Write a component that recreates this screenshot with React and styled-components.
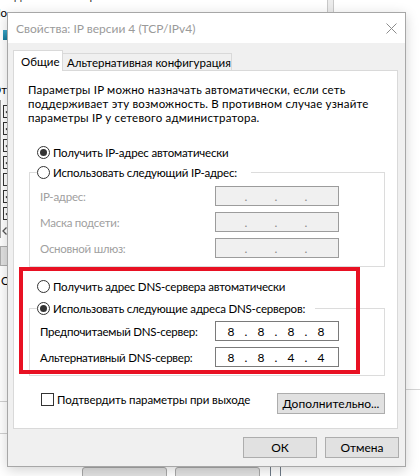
import React from "react";
import styled, { createGlobalStyle } from "styled-components";

const Global = createGlobalStyle`
  html, body { margin: 0; padding: 0; background: #fff; }
  body {
    font-family: Lato, "Noto Sans", sans-serif;
    font-size: 11.5px;
    color: #000;
  }
  * { box-sizing: border-box; }
`;

const Desktop = styled.div`
  position: relative;
  width: 420px;
  height: 476px;
  overflow: hidden;
  background: #fff;
`;

/* ---------- background window (mostly hidden) ---------- */
const BackWindow = styled.div`
  position: absolute;
  inset: 0;
  display: grid;
  grid-template-columns: 7px 1fr 15px;
  grid-template-rows: 12px 1fr 10px;
`;

const BackTop = styled.div`
  grid-column: 1 / 4;
  grid-row: 1;
  display: flex;
  align-items: flex-start;
`;

const TopText = styled.div`
  margin-top: -11px;
  line-height: 14px;
  color: #333;
  white-space: nowrap;
`;

const TopBar = styled.div`
  margin-left: auto;
  margin-right: 86px;
  width: 7px;
  height: 12px;
  background: #ececec;
  border-left: 1px solid #c9c9c9;
  border-right: 1px solid #c9c9c9;
`;

const BackLeft = styled.div`
  grid-column: 1;
  grid-row: 2 / 4;
  display: flex;
  flex-direction: column;
`;

const StripText = styled.div`
  margin-top: ${(p) => p.$mt}px;
  width: 7px;
  height: 12px;
  line-height: 12px;
  white-space: nowrap;
  display: flex;
  justify-content: ${(p) => (p.$start ? "flex-start" : "flex-end")};
  padding-left: ${(p) => (p.$start ? 1 : 0)}px;
`;

const StripIcon = styled.div`
  margin-top: 11px;
  margin-left: 3px;
  width: 6px;
  height: 10px;
  background: linear-gradient(#3aa6c9, #157a9c);
`;

const ListBox = styled.div`
  margin-top: 4px;
  width: 40px;
  border-left: 1px solid #a0a0a0;
  display: flex;
  flex-direction: column;
  gap: 4px;
  padding-top: 5px;
`;

const Tick = styled.div`
  margin-left: 2px;
  width: 13px;
  height: 13px;
  border: 1px solid #333;
  background: #fff;
  display: flex;
  align-items: center;
  justify-content: center;
`;

const ScrollArrow = styled.div`
  height: 14px;
  display: flex;
  align-items: center;
  padding-left: 1px;
`;

const BackButtonSliver = styled.div`
  margin-top: 8px;
  width: 30px;
  height: 20px;
  background: #e1e1e1;
  border: 1px solid #adadad;
`;

const StripLine = styled.div`
  margin-top: ${(p) => p.$mt}px;
  width: 7px;
  height: 1px;
  background: #d0d0d0;
`;

const BackRight = styled.div`
  grid-column: 3;
  grid-row: 2 / 3;
`;

const RightLine = styled.div`
  margin-top: 377px;
  height: 1px;
  background: #d5d5d5;
`;

const BackBottom = styled.div`
  grid-column: 1 / 4;
  grid-row: 3;
  display: flex;
  align-items: flex-start;
  padding-top: 1px;
`;

const BackButton = styled.div`
  margin-left: ${(p) => p.$ml}px;
  width: 85px;
  height: 14px;
  background: #e1e1e1;
  border: 1px solid #a8a8a8;
  border-radius: 3px;
`;

const BackEdge = styled.div`
  margin-left: ${(p) => p.$ml}px;
  margin-top: -1px;
  width: 1px;
  height: 11px;
  background: #6e7b88;
`;

/* ---------- the dialog ---------- */
const Dialog = styled.div`
  position: absolute;
  left: 7px;
  top: 12px;
  width: 399px;
  height: 455px;
  border: 1px solid #a7a7a7;
  background: #f0f0f0;
  display: flex;
  flex-direction: column;
  box-shadow: 0 3px 12px rgba(0, 0, 0, 0.18);
`;

const TitleBar = styled.div`
  flex-shrink: 0;
  height: 30px;
  background: #fff;
  display: flex;
  align-items: center;
  padding-left: 8px;
`;

const Title = styled.div`
  flex: 1;
  font-size: 12px;
  color: #9a9a9a;
  white-space: nowrap;
`;

const CloseBox = styled.div`
  width: 30px;
  height: 30px;
  margin-right: -1px;
  display: flex;
  align-items: center;
  justify-content: center;
`;

const Body = styled.div`
  flex: 1;
  display: flex;
  flex-direction: column;
  padding: 7px 7px 0 5px;
`;

const TabStrip = styled.div`
  position: relative;
  z-index: 1;
  display: flex;
  align-items: flex-end;
  height: 21px;
  margin-bottom: -1px;
`;

const Tab = styled.div`
  height: ${(p) => (p.$active ? 21 : 17)}px;
  margin-bottom: ${(p) => (p.$active ? 0 : 1)}px;
  padding-left: ${(p) => (p.$active ? 7 : 4)}px;
  width: ${(p) => p.$w}px;
  display: flex;
  align-items: center;
  background: ${(p) => (p.$active ? "#fff" : "#f0f0f0")};
  border: 1px solid #d9d9d9;
  border-bottom: none;
  border-left: ${(p) => (p.$active ? "1px solid #d9d9d9" : "none")};
  white-space: nowrap;
`;

const Panel = styled.div`
  height: 359px;
  background: #fff;
  border: 1px solid #d9d9d9;
  padding: 12px 12px 0 15px;
  display: flex;
  flex-direction: column;
`;

const Paragraph = styled.p`
  margin: 0 0 0 -1px;
  line-height: 14px;
  letter-spacing: 0.2px;
  white-space: nowrap;
`;

const RadioRow = styled.label`
  margin-top: ${(p) => p.$mt || 0}px;
  height: 20px;
  padding-left: 8px;
  display: flex;
  align-items: center;
  gap: 3px;
  letter-spacing: -0.2px;
  white-space: nowrap;
`;

const Radio = styled.span`
  flex-shrink: 0;
  width: 13px;
  height: 13px;
  border-radius: 50%;
  border: 1px solid #333;
  background: #fff;
  display: flex;
  align-items: center;
  justify-content: center;
  &::after {
    content: "";
    display: ${(p) => (p.$checked ? "block" : "none")};
    width: 7px;
    height: 7px;
    border-radius: 50%;
    background: #333;
  }
`;

const GroupBox = styled.fieldset`
  margin: ${(p) => p.$mt || 0}px 0 0 0;
  padding: 0 0 8px 0;
  min-width: 0;
  border: 1px solid #dcdcdc;
`;

const Legend = styled.legend`
  margin-left: 7px;
  padding: 0;
  width: ${(p) => p.$w}px;
  height: 20px;
  display: flex;
  align-items: center;
  gap: 3px;
  letter-spacing: -0.2px;
  white-space: nowrap;
`;

const FieldRow = styled.div`
  margin-top: ${(p) => p.$mt}px;
  padding-left: 10px;
  height: 20px;
  display: grid;
  grid-template-columns: 175px 124px;
  align-items: center;
`;

const FieldLabel = styled.span`
  color: ${(p) => (p.$disabled ? "#a0a0a0" : "#000")};
  letter-spacing: -0.25px;
  white-space: nowrap;
`;

const IpBox = styled.div`
  height: 20px;
  border: 1px solid ${(p) => (p.$disabled ? "#9c9c9c" : "#7a7a7a")};
  background: ${(p) => (p.$disabled ? "#f0f0f0" : "#fff")};
  display: flex;
  align-items: center;
  padding-left: 3px;
  font-size: 12px;
  color: ${(p) => (p.$disabled ? "#8a8a8a" : "#000")};
`;

const Octet = styled.span`
  width: 24px;
  text-align: center;
`;

const Dot = styled.span`
  width: 6px;
  text-align: center;
`;

const ConfirmRow = styled.div`
  margin-top: 13px;
  display: flex;
  align-items: flex-start;
`;

const CheckRow = styled.label`
  height: 20px;
  padding-left: 12px;
  display: flex;
  align-items: center;
  gap: 3px;
  letter-spacing: -0.1px;
  white-space: nowrap;
`;

const CheckBox = styled.span`
  flex-shrink: 0;
  width: 13px;
  height: 13px;
  border: 1px solid #333;
  background: #fff;
`;

const Button = styled.button`
  margin: ${(p) => p.$mt || 0}px 0 0 ${(p) => (p.$push ? "auto" : "0")};
  width: ${(p) => p.$w}px;
  height: 21px;
  padding: 0;
  background: #e1e1e1;
  border: 1px solid #adadad;
  font: inherit;
  font-size: 12px;
  color: #000;
`;

const Footer = styled.div`
  display: flex;
  justify-content: flex-end;
  gap: 8px;
  padding-top: 8px;
  margin-right: -1px;
`;

const Annotation = styled.div`
  position: absolute;
  left: 19px;
  top: 267px;
  width: 341px;
  height: 107px;
  border: 4px solid #e81123;
  pointer-events: none;
`;

function IpField({ values, disabled }) {
  return (
    <IpBox $disabled={disabled}>
      <Octet>{values[0]}</Octet>
      <Dot>.</Dot>
      <Octet>{values[1]}</Octet>
      <Dot>.</Dot>
      <Octet>{values[2]}</Octet>
      <Dot>.</Dot>
      <Octet>{values[3]}</Octet>
    </IpBox>
  );
}

const empty = ["", "", "", ""];

export default function App() {
  return (
    <Desktop>
      <Global />
      <BackWindow>
        <BackTop>
          <TopText>Подключение через:</TopText>
          <TopBar />
        </BackTop>
        <BackLeft>
          <StripText $mt={-5}>Ио</StripText>
          <StripIcon />
          <StripText $mt={44}>От</StripText>
          <ListBox>
            {[1, 1, 1, 1, 0, 1, 1].map((c, i) => (
              <Tick key={i}>
                {c ? (
                  <svg width="9" height="9" viewBox="0 0 9 9">
                    <path d="M1 4.5 L3.5 7 L8 1.5" fill="none" stroke="#222" strokeWidth="1.4" />
                  </svg>
                ) : null}
              </Tick>
            ))}
            <ScrollArrow>
              <svg width="5" height="8" viewBox="0 0 5 8">
                <path d="M4.5 0.5 L1 4 L4.5 7.5" fill="none" stroke="#555" strokeWidth="1.3" />
              </svg>
            </ScrollArrow>
          </ListBox>
          <BackButtonSliver />
          <StripText $mt={9} $start>
            Описание
          </StripText>
          <StripLine $mt={114} />
          <StripLine $mt={31} />
        </BackLeft>
        <BackRight>
          <RightLine />
        </BackRight>
        <BackBottom>
          <BackButton $ml={82} />
          <BackButton $ml={8} />
          <BackEdge $ml={10} />
          <BackEdge $ml={9} />
        </BackBottom>
      </BackWindow>

      <Dialog>
        <TitleBar>
          <Title>Свойства: IP версии 4 (TCP/IPv4)</Title>
          <CloseBox>
            <svg width="11" height="11" viewBox="0 0 11 11">
              <path d="M0.5 0.5 L10.5 10.5 M10.5 0.5 L0.5 10.5" stroke="#8c8c8c" strokeWidth="1" />
            </svg>
          </CloseBox>
        </TitleBar>
        <Body>
          <TabStrip>
            <Tab $active $w={50}>Общие</Tab>
            <Tab $w={169}>Альтернативная конфигурация</Tab>
          </TabStrip>
          <Panel>
            <Paragraph>
              Параметры IP можно назначать автоматически, если сеть
              <br />
              поддерживает эту возможность. В противном случае узнайте
              <br />
              параметры IP у сетевого администратора.
            </Paragraph>

            <RadioRow $mt={17}>
              <Radio $checked />
              Получить IP-адрес автоматически
            </RadioRow>
            <GroupBox>
              <Legend $w={214}>
                <Radio />
                Использовать следующий IP-адрес:
              </Legend>
              <FieldRow $mt={4}>
                <FieldLabel $disabled>IP-адрес:</FieldLabel>
                <IpField values={empty} disabled />
              </FieldRow>
              <FieldRow $mt={6}>
                <FieldLabel $disabled>Маска подсети:</FieldLabel>
                <IpField values={empty} disabled />
              </FieldRow>
              <FieldRow $mt={6}>
                <FieldLabel $disabled>Основной шлюз:</FieldLabel>
                <IpField values={empty} disabled />
              </FieldRow>
            </GroupBox>

            <RadioRow $mt={9}>
              <Radio />
              Получить адрес DNS-сервера автоматически
            </RadioRow>
            <GroupBox $mt={2}>
              <Legend $w={278}>
                <Radio $checked />
                Использовать следующие адреса DNS-серверов:
              </Legend>
              <FieldRow $mt={3}>
                <FieldLabel>Предпочитаемый DNS-сервер:</FieldLabel>
                <IpField values={["8", "8", "8", "8"]} />
              </FieldRow>
              <FieldRow $mt={6}>
                <FieldLabel>Альтернативный DNS-сервер:</FieldLabel>
                <IpField values={["8", "8", "4", "4"]} />
              </FieldRow>
            </GroupBox>

            <ConfirmRow>
              <CheckRow>
                <CheckBox />
                Подтвердить параметры при выходе
              </CheckRow>
              <Button $push $mt={4} $w={108}>
                Дополнительно...
              </Button>
            </ConfirmRow>
          </Panel>
          <Footer>
            <Button $w={74}>ОК</Button>
            <Button $w={74}>Отмена</Button>
          </Footer>
        </Body>
      </Dialog>
      <Annotation />
    </Desktop>
  );
}
